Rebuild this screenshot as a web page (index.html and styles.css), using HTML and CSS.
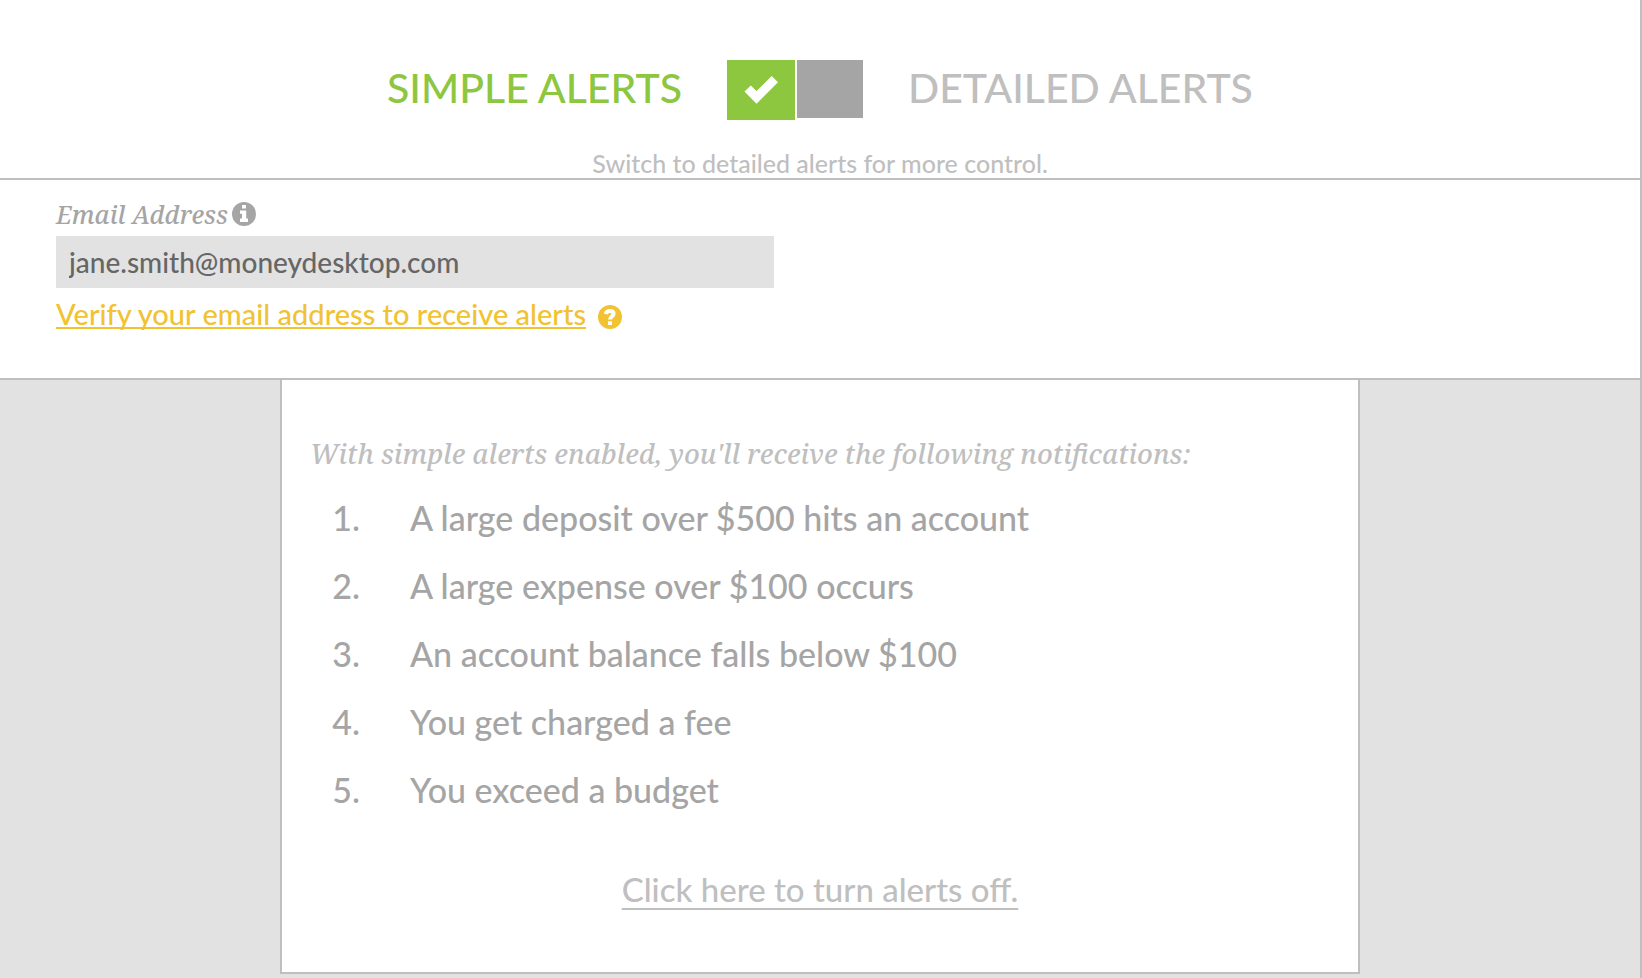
FILE: index.html
```html
<!DOCTYPE html>
<html lang="en">
<head>
<meta charset="utf-8">
<meta name="viewport" content="width=device-width, initial-scale=1">
<title>Alert settings</title>
<link rel="stylesheet" href="styles.css">
</head>
<body>
<div class="page">
  <header class="mode">
    <div class="mode-row">
      <label class="mode-name mode-name-on" for="mode-simple">SIMPLE ALERTS</label>
      <div class="toggle">
        <span class="tile">
          <input class="tile-input" type="radio" name="mode" id="mode-simple" checked>
          <svg class="tile-check" viewBox="0 0 34 28" aria-hidden="true">
            <path d="M0.5 15.5 6.8 9.4 12.5 15.1 27.7 0 34 6.3 12.5 27.8Z"/>
          </svg>
        </span>
        <span class="tile">
          <input class="tile-input" type="radio" name="mode" id="mode-detailed">
        </span>
      </div>
      <label class="mode-name" for="mode-detailed">DETAILED ALERTS</label>
    </div>
    <p class="mode-hint">Switch to detailed alerts for more control.</p>
  </header>

  <section class="contact">
    <div class="contact-label">
      <label for="email">Email Address</label>
      <svg class="icon" viewBox="0 0 24 24" aria-hidden="true">
        <circle cx="12" cy="12" r="12"/>
        <path class="icon-mark" d="M10 3h4v3.6h-4zM8 8.4h6.2v8.2H16V20H8v-3.4h2v-4.8H8z"/>
      </svg>
    </div>
    <input class="contact-input" type="email" id="email" value="jane.smith@moneydesktop.com">
    <div class="contact-verify">
      <a class="verify-link" href="#verify">Verify your email address to receive alerts</a>
      <svg class="icon" viewBox="0 0 24 24" aria-hidden="true">
        <circle cx="12" cy="12" r="12"/>
        <path class="icon-curve" d="M7.8 9.2C8.2 7 9.8 6 11.9 6c2.3 0 3.7 1.1 3.7 2.8 0 2.8-3.6 2.7-3.6 5.8"/>
        <path class="icon-mark" d="M10 16.2h4V20h-4z"/>
      </svg>
    </div>
  </section>

  <main class="content">
    <section class="panel">
      <h1 class="panel-title">With simple alerts enabled, you'll receive the following notifications:</h1>
      <ol class="alerts">
        <li class="alert">A large deposit over $500 hits an account</li>
        <li class="alert">A large expense over $100 occurs</li>
        <li class="alert">An account balance falls below $100</li>
        <li class="alert">You get charged a fee</li>
        <li class="alert">You exceed a budget</li>
      </ol>
      <p class="panel-off"><a class="off-link" href="#off">Click here to turn alerts off.</a></p>
    </section>
  </main>
</div>
</body>
</html>
```
FILE: styles.css
```css
* {
  box-sizing: border-box;
}

body {
  margin: 0;
  background: #fff;
  color: #a5a5a5;
  font-family: Lato, "Liberation Sans", sans-serif;
  font-weight: 500;
}

.page {
  display: flex;
  flex-direction: column;
  min-height: 100vh;
  border-right: 2px solid #bfbfbf;
}

/* Simple / detailed switch */
.mode {
  padding-top: 60px;
  border-bottom: 2px solid #bfbfbf;
  color: #bfbfbf;
  text-align: center;
}

.mode-row {
  display: flex;
  flex-wrap: wrap;
  justify-content: center;
  align-items: flex-start;
  gap: 0 45px;
}

.mode-name {
  font-size: 41px;
  line-height: 56px;
  cursor: pointer;
}

.mode-name-on {
  color: #8dc63f;
}

.toggle {
  display: flex;
  align-items: flex-start;
  gap: 2px;
}

.tile {
  display: grid;
  place-items: center;
}

.tile-input {
  grid-area: 1 / 1;
  appearance: none;
  width: 66px;
  height: 58px;
  margin: 0;
  background: #a5a5a5;
  cursor: pointer;
}

.tile-input:checked {
  width: 68px;
  height: 60px;
  background: #8dc63f;
}

.tile-check {
  grid-area: 1 / 1;
  width: 34px;
  height: 28px;
  fill: #fff;
  pointer-events: none;
}

.mode-hint {
  margin: 28px 0 0;
  font-size: 25px;
  line-height: 30px;
}

/* Email address */
.contact {
  padding: 18px 56px 49px;
  border-bottom: 2px solid #bfbfbf;
}

.contact-label {
  display: flex;
  align-items: center;
  gap: 4px;
  font: italic 500 25px/32px "Noto Serif", "Liberation Serif", serif;
}

.contact-input {
  display: block;
  width: 100%;
  max-width: 718px;
  height: 52px;
  margin-top: 6px;
  padding: 0 13px;
  border: 0;
  background: #e2e2e2;
  color: #666;
  font: inherit;
  font-size: 28px;
}

.contact-verify {
  display: flex;
  align-items: flex-end;
  gap: 12px;
  margin-top: 11px;
  color: #f1c232;
}

.verify-link {
  color: inherit;
  font-size: 29px;
  line-height: 30px;
  text-decoration-thickness: 2px;
  text-decoration-skip-ink: none;
  text-underline-offset: 2px;
}

.icon {
  flex: none;
  width: 24px;
  height: 24px;
  fill: currentColor;
}

.icon-mark {
  fill: #fff;
}

.icon-curve {
  fill: none;
  stroke: #fff;
  stroke-width: 4;
}

/* Notification list */
.content {
  flex: 1;
  padding-bottom: 4px;
  background: #e2e2e2;
}

.panel {
  max-width: 1080px;
  margin: 0 auto;
  padding: 56px 28px 63px;
  border: 2px solid #bfbfbf;
  border-top: 0;
  background: #fff;
}

.panel-title {
  margin: 0;
  color: #bfbfbf;
  font: italic 500 27px/36px "Noto Serif", "Liberation Serif", serif;
}

.alerts {
  margin: 12px 0 0;
  padding: 0;
  list-style: none;
  counter-reset: alert;
}

.alert {
  display: grid;
  grid-template-columns: 50px 1fr;
  gap: 50px;
  font-size: 34px;
  line-height: 68px;
  counter-increment: alert;
}

.alert::before {
  content: counter(alert) ".";
  text-align: right;
}

.panel-off {
  margin: 45px 0 0;
  color: #bfbfbf;
  font-size: 33px;
  line-height: 40px;
  text-align: center;
}

.off-link {
  color: inherit;
  text-decoration-thickness: 2px;
  text-decoration-skip-ink: none;
  text-underline-offset: 6px;
}
```
